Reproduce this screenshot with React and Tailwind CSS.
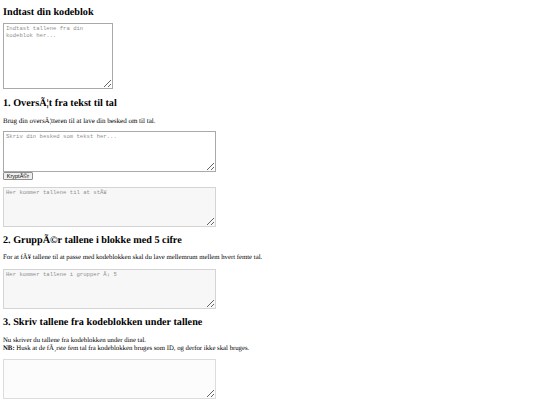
export default function App() {
  const serif = { fontFamily: '"Liberation Serif", "Times New Roman", serif' };
  const heading = 'text-[10.2px] leading-[13px] font-bold text-black';
  const para = 'text-[6.75px] leading-[8px] text-black';
  const area =
    'block px-[2px] py-[1px] text-[5.6px] leading-[7px] font-["Liberation_Mono",monospace] placeholder:text-[#8f8f8f] outline-none';

  return (
    <div
      className="min-h-[405px] w-[540px] bg-white pl-[3px] pt-[6px] [text-rendering:geometricPrecision]"
      style={serif}
    >
      <h3 className={heading}>Indtast din kodeblok</h3>
      <textarea
        className={`${area} mt-[4px] h-[66px] w-[110px] border border-[#a9a9a9] bg-white`}
        placeholder="Indtast tallene fra din kodeblok her..."
      />

      <h3 className={`${heading} mt-[8px]`}>1. OversÃ¦t fra tekst til tal</h3>
      <p className={`${para} mt-[7px] text-[7px]`}>Brug din oversÃ¦tteren til at lave din besked om til tal.</p>
      <textarea
        className={`${area} mt-[6px] h-[41px] w-[213px] border border-[#a9a9a9] bg-white`}
        placeholder="Skriv din besked som tekst her..."
      />
      <button className="block h-[8px] w-[30px] border border-[#8f8f8f] bg-[#efefef] text-[5.5px] leading-[6px] text-black font-['Liberation_Sans',sans-serif] rounded-[1px]">
        KryptÃ©r
      </button>
      <textarea
        readOnly
        className={`${area} mt-[7px] h-[40px] w-[213px] border border-[#d4d4d4] bg-[#f7f7f7]`}
        placeholder="Her kommer tallene til at stÃ¥"
      />

      <h3 className={`${heading} mt-[7px]`}>2. GruppÃ©r tallene i blokke med 5 cifre</h3>
      <p className={`${para} mt-[7px]`}>
        For at fÃ¥ tallene til at passe med kodeblokken skal du lave mellemrum mellem hvert femte tal.
      </p>
      <textarea
        readOnly
        className={`${area} mt-[7px] h-[40px] w-[213px] border border-[#d4d4d4] bg-[#f7f7f7]`}
        placeholder="Her kommer tallene i grupper Ã¡ 5"
      />

      <h3 className={`${heading} mt-[7px]`}>3. Skriv tallene fra kodeblokken under tallene</h3>
      <p className={`${para} mt-[8px]`}>
        Nu skriver du tallene fra kodeblokken under dine tal.
        <br />
        <b>NB:</b> Husk at de fÃ¸rste fem tal fra kodeblokken bruges som ID, og derfor ikke skal bruges.
      </p>
      <textarea
        className={`${area} mt-[6px] h-[40px] w-[213px] border border-[#dcdcdc] bg-[#fcfcfc]`}
      />
    </div>
  );
}
